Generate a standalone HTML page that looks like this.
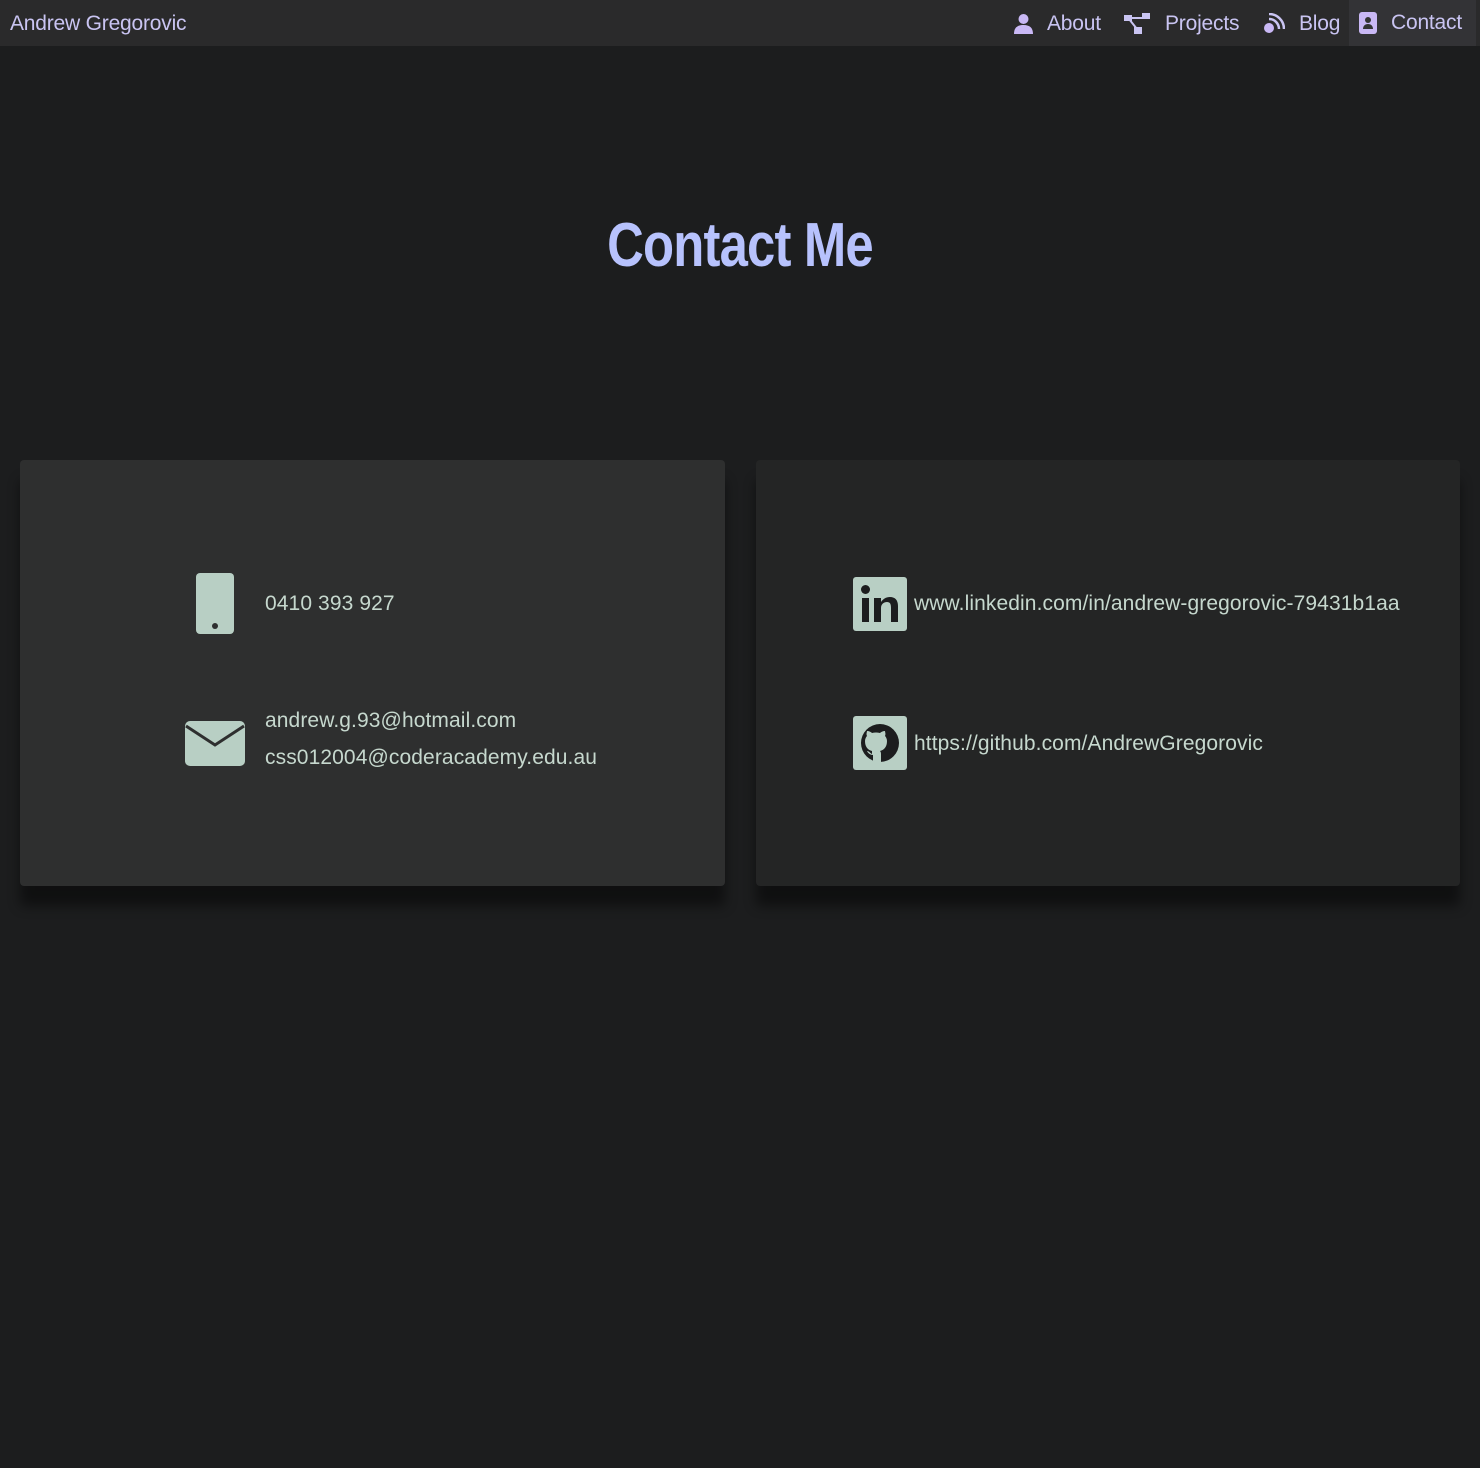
<!DOCTYPE html>
<html><head><style>
*{margin:0;padding:0;box-sizing:border-box}
body{width:1480px;height:1468px;background:#1c1d1e;font-family:"Liberation Sans",sans-serif;position:relative;overflow:hidden}
nav{position:absolute;top:0;left:0;width:1480px;height:46px;background:#2a2a2b}
.brand{position:absolute;left:10px;top:12px;color:#c9c4f2;font-size:21px;letter-spacing:-0.2px}
.item{position:absolute;top:1px;height:45px;display:flex;align-items:center;color:#c9c4f2;font-size:21px;letter-spacing:-0.2px}
.item svg{margin-right:14px}
h1{position:absolute;top:210px;left:0;width:1480px;text-align:center;font-weight:bold;font-size:62px;color:#b7c2fd;letter-spacing:-1px;transform:scaleX(0.82)}
.card{position:absolute;top:460px;height:426px;border-radius:4px;box-shadow:0 20px 12px rgba(0,0,0,.45)}
.t{position:absolute;color:#c6d8ce;font-size:21px;letter-spacing:0.1px}
</style></head><body>
<nav>
<div class="brand">Andrew Gregorovic</div>
<div class="item" style="left:1014px"><svg width="19" height="22" viewBox="0 0 19 22"><circle cx="9.5" cy="6" r="5" fill="#c9b8f5"/><path d="M0 21c0-6 3-9 9.5-9s9.5 3 9.5 9z" fill="#c9b8f5"/></svg>About</div>
<div class="item" style="left:1124px"><svg width="27" height="22" viewBox="0 0 27 22"><rect x="0" y="2" width="8" height="6" fill="#c9c4f2"/><rect x="18" y="0" width="8" height="6" fill="#c9c4f2"/><rect x="10" y="14" width="8" height="7" fill="#c9c4f2"/><path d="M6 5h14M5 6l8 10" stroke="#c9c4f2" stroke-width="2"/></svg>Projects</div>
<div class="item" style="left:1263px"><svg width="22" height="22" viewBox="0 0 22 22"><circle cx="6" cy="15" r="5" fill="#c9b8f5"/><path d="M6 6a10 10 0 0 1 10 10M6 1a15 15 0 0 1 15 15" stroke="#c9c4f2" stroke-width="2.5" fill="none"/></svg>Blog</div>
<div class="item" style="left:1349px;width:127px;background:#333336;padding-left:10px;top:0;height:46px"><svg width="18" height="22" viewBox="0 0 18 22"><rect x="0" y="0" width="18" height="22" rx="3" fill="#c9b8f5"/><circle cx="9" cy="8" r="3" fill="#333"/><path d="M4 17c0-3 2-5 5-5s5 2 5 5z" fill="#333"/></svg>Contact</div>
</nav>
<h1>Contact Me</h1>
<div class="card" style="left:20px;width:705px;background:#2e2f2f"></div>
<div class="card" style="left:756px;width:704px;background:#242525"></div>
<svg style="position:absolute;left:195px;top:573px" width="40" height="62" viewBox="0 0 40 62"><rect x="1" y="0" width="38" height="61" rx="4" fill="#b8cfc4"/><circle cx="20" cy="53" r="3" fill="#2e2f2f"/></svg>
<div class="t" style="left:265px;top:592px">0410 393 927</div>
<svg style="position:absolute;left:184px;top:720px" width="62" height="47" viewBox="0 0 62 47"><rect x="1" y="1" width="60" height="45" rx="5" fill="#b8cfc4"/><path d="M2 6l29 19 29-19" stroke="#2e2f2f" stroke-width="3" fill="none"/></svg>
<div class="t" style="left:265px;top:709px">andrew.g.93@hotmail.com</div>
<div class="t" style="left:265px;top:746px">css012004@coderacademy.edu.au</div>
<svg style="position:absolute;left:853px;top:577px" width="54" height="54" viewBox="0 0 54 54"><rect width="54" height="54" rx="3" fill="#b8cfc4"/><rect x="9" y="21" width="7" height="24" fill="#1c1d1e"/><circle cx="12.5" cy="12.5" r="4.5" fill="#1c1d1e"/><path d="M21 21h7v4c2-3 5-5 9-5 5 0 8 3 8 9v16h-7V31c0-4-1-6-4-6s-6 2-6 6v14h-7z" fill="#1c1d1e"/></svg>
<div class="t" style="left:914px;top:592px">www.linkedin.com/in/andrew-gregorovic-79431b1aa</div>
<svg style="position:absolute;left:853px;top:716px" width="54" height="54" viewBox="0 0 54 54"><rect width="54" height="54" rx="3" fill="#b8cfc4"/><circle cx="27" cy="27" r="19" fill="#1c1d1e"/><path d="M20 46v-7c-3 0-5-2-6-4 2 0 3 2 5 3v-3c-4-1-7-4-7-10 0-2 1-4 2-5-1-2 0-4 0-5 2 0 4 1 5 2a16 16 0 0 1 8 0c1-1 3-2 5-2 0 1 1 3 0 5 1 1 2 3 2 5 0 6-3 9-7 10 1 1 1 2 1 4v7z" fill="#b8cfc4"/></svg>
<div class="t" style="left:914px;top:732px">https://github.com/AndrewGregorovic</div>
</body></html>
